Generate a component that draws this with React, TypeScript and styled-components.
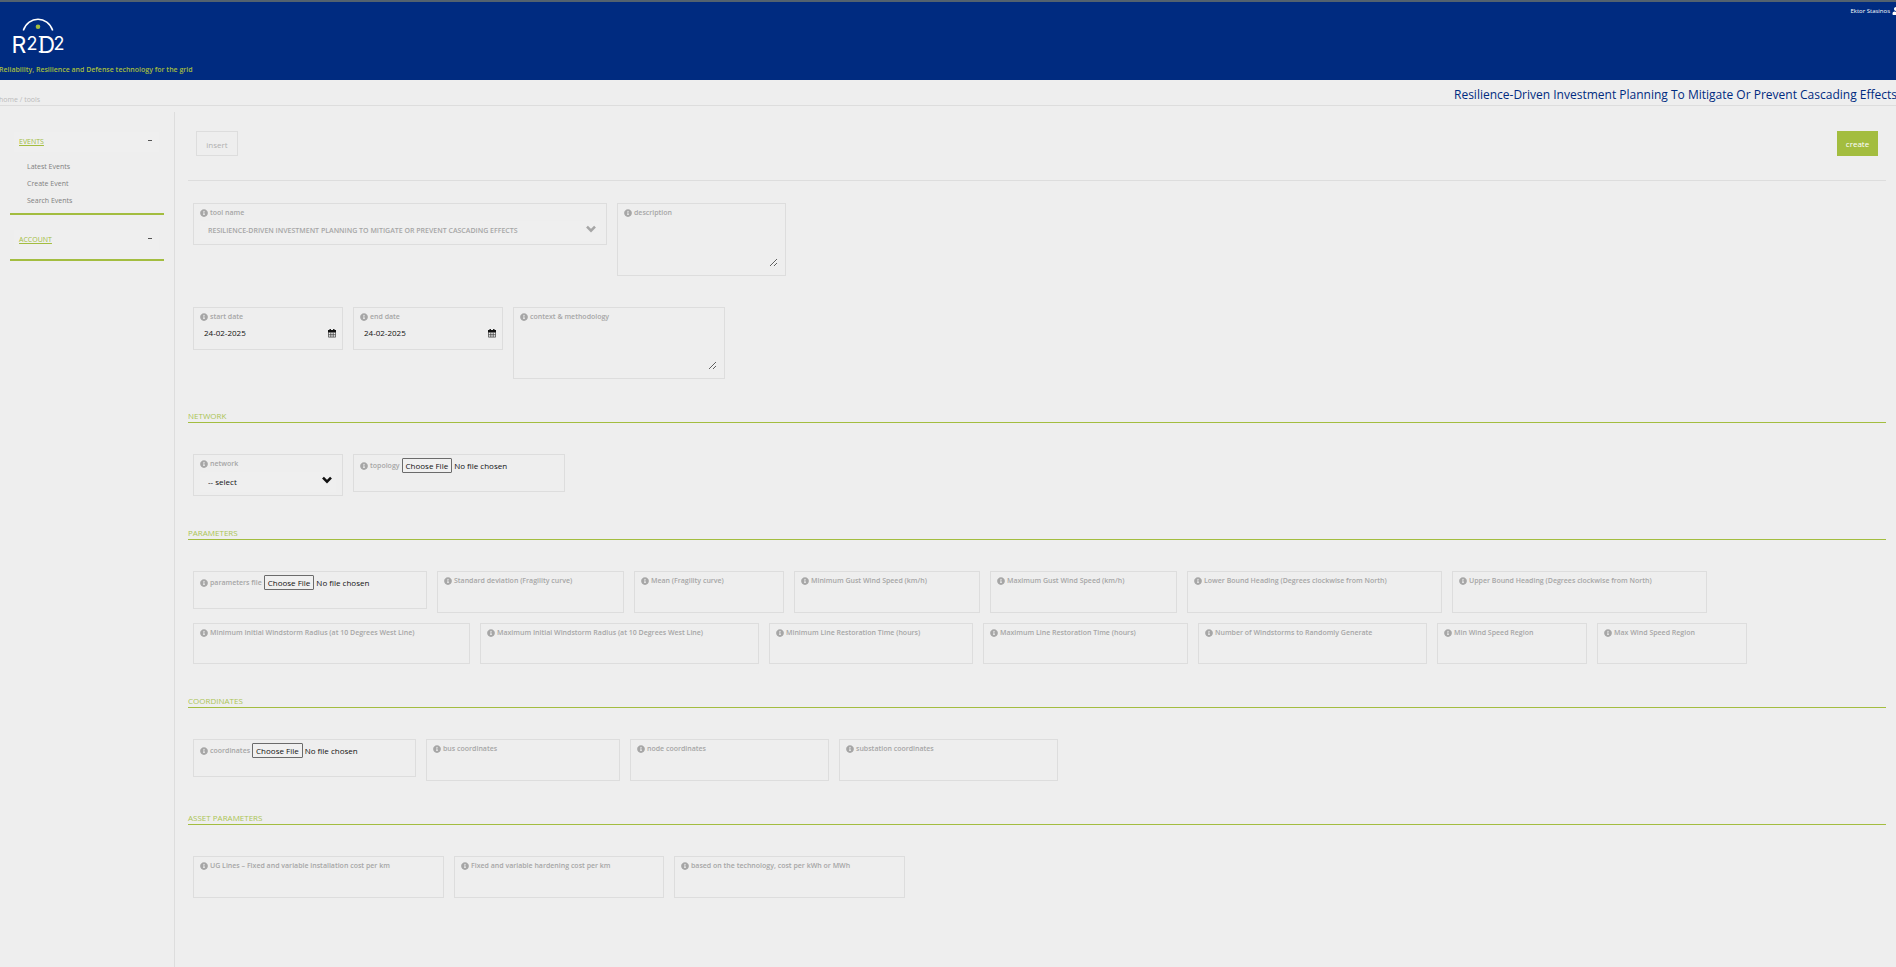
import React, { useId } from "react";
import styled, { createGlobalStyle } from "styled-components";
import { FaInfoCircle, FaUser } from "react-icons/fa";

const green = "#a3bd3f";
const blue = "#002b80";
const line = "#dddddd";
const muted = "#a6a6a6";

const GlobalStyle = createGlobalStyle`
  *, *::before, *::after { box-sizing: border-box; }
  html, body, #root { min-height: 100vh; }
  body {
    margin: 0;
    background: #eeeeee;
    color: ${muted};
    font-family: "Open Sans", sans-serif;
    font-size: 7px;
    line-height: 10px;
    overflow-x: hidden;
  }
  #root { display: flex; }
  input, select, textarea, button { font: inherit; color: inherit; }
`;

const Page = styled.div`
  display: flex;
  flex-direction: column;
  flex: 1;
  min-width: 0;
  overflow: hidden;
`;

const Header = styled.header`
  display: flex;
  justify-content: space-between;
  align-items: flex-start;
  height: 80px;
  background: ${blue};
  border-top: 2px solid #53626f;
`;

const Brand = styled.div`
  display: flex;
  flex-direction: column;
  gap: 8px;
  padding-top: 12px;
`;

const Logo = styled.svg`
  display: block;
  width: 56px;
  height: 42px;
  margin-left: 10px;
  overflow: visible;
`;

const Tagline = styled.p`
  margin: 0 0 0 -1px;
  color: ${green};
  font-weight: 600;
  line-height: 12px;
`;

const User = styled.a`
  display: flex;
  align-items: center;
  gap: 2px;
  margin: 4px -4px 0 0;
  color: #ffffff;
  font-size: 6px;
  text-decoration: none;
  white-space: nowrap;
  svg { width: 8px; height: 8px; }
`;

const TitleBar = styled.div`
  display: flex;
  justify-content: space-between;
  align-items: flex-end;
  height: 26px;
  border-bottom: 1px solid ${line};
`;

const Breadcrumb = styled.nav`
  margin-left: -1px;
  color: #bbbbbb;
  a { color: inherit; text-decoration: none; }
`;

const Title = styled.h1`
  margin: 0 -1px 0 0;
  padding-bottom: 2px;
  color: ${blue};
  font-size: 12px;
  font-weight: 400;
  line-height: 16px;
  white-space: nowrap;
`;

const Body = styled.div`
  display: flex;
  flex: 1;
  padding-top: 6px;
`;

const Sidebar = styled.aside`
  flex: 0 0 175px;
  padding: 20px 10px 0;
  border-right: 1px solid ${line};
`;

const MenuGroup = styled.section`
  padding-bottom: 9px;
  margin-bottom: 15px;
  border-bottom: 2px solid ${green};
`;

const MenuHead = styled.div`
  display: flex;
  justify-content: space-between;
  align-items: center;
  height: 20px;
  margin: 0 5px 0 4px;
  padding: 0 7px 0 5px;
  background: #efefef;
  a { color: ${green}; }
`;

const Collapse = styled.button`
  width: 4px;
  height: 10px;
  padding: 0;
  border: 0;
  background: linear-gradient(#555555, #555555) 0 3px / 4px 1px no-repeat;
`;

const MenuList = styled.ul`
  display: flex;
  flex-direction: column;
  gap: 7px;
  margin: 10px 0 -2px;
  padding: 0 0 0 17px;
  list-style: none;
  a { color: #808080; text-decoration: none; }
`;

const Main = styled.main`
  flex: 1;
  min-width: 0;
  padding: 19px 10px 60px 13px;
`;

const Actions = styled.div`
  display: flex;
  justify-content: space-between;
  height: 50px;
  padding: 0 8px;
  border-bottom: 1px solid ${line};
`;

const Action = styled.button<{ $primary?: boolean }>`
  height: 25px;
  width: ${(p) => (p.$primary ? 41 : 42)}px;
  padding: ${(p) => (p.$primary ? 0 : 2)}px 0 0;
  border: 1px solid ${(p) => (p.$primary ? green : line)};
  background: ${(p) => (p.$primary ? green : "transparent")};
  color: ${(p) => (p.$primary ? "#ffffff" : "#b0b0b0")};
  font-size: 8px;
`;

const Form = styled.form`
  display: flex;
  flex-direction: column;
  gap: 31px;
  padding-top: 22px;
`;

const Section = styled.section`
  display: flex;
  flex-direction: column;
  gap: 31px;
`;

const Heading = styled.h2`
  margin: 0;
  height: 13px;
  border-bottom: 1px solid ${green};
  color: #abc455;
  font-size: 8px;
  font-weight: 400;
  line-height: 11px;
`;

const Row = styled.div`
  display: flex;
  flex-wrap: wrap;
  align-items: flex-start;
  gap: 10px;
  padding: 0 5px;
`;

const Field = styled.div<{ $w: number; $h?: number }>`
  display: flex;
  flex-direction: column;
  flex: 0 0 ${(p) => p.$w}px;
  height: ${(p) => p.$h ?? 42}px;
  padding: 4px 6px 3px;
  border: 1px solid ${line};
`;

const Label = styled.label`
  display: flex;
  align-items: center;
  gap: 2px;
  font-weight: 600;
  white-space: nowrap;
  svg { width: 8px; height: 8px; flex: none; }
`;

const TextInput = styled.input`
  flex: 1;
  width: 100%;
  min-height: 0;
  padding: 0 4px;
  border: 0;
  background: transparent;
  font-size: 8px;
  outline: none;
`;

const TextArea = styled.textarea`
  flex: 1;
  margin: 0 1px 5px 0;
  padding: 2px;
  border: 0;
  background: transparent;
  outline: none;
  resize: both;
`;

const SelectWrap = styled.div<{ $dark?: boolean }>`
  display: grid;
  align-items: center;
  height: 20px;
  margin-top: 3px;
  color: ${(p) => (p.$dark ? "#111111" : "#a6a6a6")};
  font-size: ${(p) => (p.$dark ? 8 : 7)}px;
  font-weight: ${(p) => (p.$dark ? 400 : 600)};
  > * { grid-area: 1 / 1; }
  svg {
    justify-self: end;
    width: 10px;
    height: 8px;
    margin: 0 4px 4px 0;
    pointer-events: none;
  }
`;

const Select = styled.select`
  appearance: none;
  width: 100%;
  height: 20px;
  padding: 0 8px 1px;
  border: 0;
  background: #efefef;
  &:disabled { color: #a6a6a6; opacity: 1; }
`;

const DateWrap = styled.div`
  display: flex;
  align-items: center;
  height: 20px;
  margin-top: 1px;
  color: #111111;
  svg { width: 8px; height: 9px; flex: none; }
`;

const FileRow = styled.div`
  display: flex;
  align-items: center;
  gap: 2px;
  height: 13px;
`;

const FileInput = styled.input`
  flex: 1;
  min-width: 0;
  height: 15px;
  color: #111111;
  font-size: 8px;
  &::file-selector-button {
    height: 15px;
    margin: 0 2px 0 0;
    padding: 0 3px;
    border: 1px solid #6b6b6b;
    border-radius: 1px;
    background: #f0f0f0;
    color: #111111;
    font: inherit;
  }
`;

const Chevron = () => (
  <svg viewBox="0 0 10 8" aria-hidden="true">
    <path d="M1 1.6 5 5.6 9 1.6" fill="none" stroke="currentColor" strokeWidth="2.6" />
  </svg>
);

const Calendar = () => (
  <svg viewBox="0 0 8 9" aria-hidden="true">
    <path d="M0 1h8v2.4H0z M1.5 0h1.4v2H1.5z M5.1 0h1.4v2H5.1z" fill="#111" />
    <path d="M.4 3v5.1h7.2V3 M2.8 3.4V8 M5.2 3.4V8 M.4 5.7h7.2" fill="none" stroke="#333" strokeWidth=".7" />
  </svg>
);

type Base = { label: string; w: number; h?: number };

const Text = ({ label, w, h }: Base) => {
  const id = useId();
  return (
    <Field $w={w} $h={h}>
      <Label htmlFor={id}><FaInfoCircle />{label}</Label>
      <TextInput id={id} type="text" />
    </Field>
  );
};

const Area = ({ label, w, h }: Base) => {
  const id = useId();
  return (
    <Field $w={w} $h={h}>
      <Label htmlFor={id}><FaInfoCircle />{label}</Label>
      <TextArea id={id} />
    </Field>
  );
};

const DateField = ({ label, w, h }: Base) => {
  const id = useId();
  return (
    <Field $w={w} $h={h}>
      <Label htmlFor={id}><FaInfoCircle />{label}</Label>
      <DateWrap>
        <TextInput id={id} type="text" defaultValue="24-02-2025" />
        <Calendar />
      </DateWrap>
    </Field>
  );
};

const SelectField = ({ label, w, option, disabled }: Base & { option: string; disabled?: boolean }) => {
  const id = useId();
  return (
    <Field $w={w}>
      <Label htmlFor={id}><FaInfoCircle />{label}</Label>
      <SelectWrap $dark={!disabled}>
        <Select id={id} disabled={disabled}><option>{option}</option></Select>
        <Chevron />
      </SelectWrap>
    </Field>
  );
};

const FileField = ({ label, w }: Base) => {
  const id = useId();
  return (
    <Field $w={w} $h={38}>
      <FileRow>
        <Label htmlFor={id}><FaInfoCircle />{label}</Label>
        <FileInput id={id} type="file" />
      </FileRow>
    </Field>
  );
};

const windParameters: Base[] = [
  { label: "Standard deviation (Fragility curve)", w: 187 },
  { label: "Mean (Fragility curve)", w: 150 },
  { label: "Minimum Gust Wind Speed (km/h)", w: 186 },
  { label: "Maximum Gust Wind Speed (km/h)", w: 187 },
  { label: "Lower Bound Heading (Degrees clockwise from North)", w: 255 },
  { label: "Upper Bound Heading (Degrees clockwise from North)", w: 255 },
  { label: "Minimum Initial Windstorm Radius (at 10 Degrees West Line)", w: 277, h: 41 },
  { label: "Maximum Initial Windstorm Radius (at 10 Degrees West Line)", w: 279, h: 41 },
  { label: "Minimum Line Restoration Time (hours)", w: 204, h: 41 },
  { label: "Maximum Line Restoration Time (hours)", w: 205, h: 41 },
  { label: "Number of Windstorms to Randomly Generate", w: 229, h: 41 },
  { label: "Min Wind Speed Region", w: 150, h: 41 },
  { label: "Max Wind Speed Region", w: 150, h: 41 },
];

const coordinates: Base[] = [
  { label: "bus coordinates", w: 194 },
  { label: "node coordinates", w: 199 },
  { label: "substation coordinates", w: 219 },
];

const assets: Base[] = [
  { label: "UG Lines – Fixed and variable installation cost per km", w: 251 },
  { label: "Fixed and variable hardening cost per km", w: 210 },
  { label: "based on the technology, cost per kWh or MWh", w: 231 },
];

export default function App() {
  return (
    <>
      <GlobalStyle />
      <Page>
        <Header>
          <Brand>
            <Logo viewBox="10 14 56 42" role="img" aria-label="R2D2">
              <path d="M23.3 30.5C28 15.5 48 15.5 52.7 30.5" fill="none" stroke="#fff" strokeWidth="1.5" />
              <circle cx="38" cy="26.7" r="2.3" fill={green} />
              <path d="M38.8 36.6h4 M38.8 51.8h4" stroke="#fff" strokeWidth="1.4" />
              <g fill="#fff" fontFamily="Inter, sans-serif" fontWeight="400">
                <text x="11.4" y="52.6" fontSize="23">R</text>
                <text x="38.6" y="52.6" fontSize="23">D</text>
                <text x="26.4" y="49.6" fontSize="18">2</text>
                <text x="53.4" y="49.6" fontSize="18">2</text>
              </g>
            </Logo>
            <Tagline>Reliability, Resilience and Defense technology for the grid</Tagline>
          </Brand>
          <User href="#">Ektor Stasinos <FaUser /></User>
        </Header>
        <TitleBar>
          <Breadcrumb><a href="#">home</a> / <a href="#">tools</a></Breadcrumb>
          <Title>Resilience-Driven Investment Planning To Mitigate Or Prevent Cascading Effects</Title>
        </TitleBar>
        <Body>
          <Sidebar>
            <MenuGroup>
              <MenuHead><a href="#">EVENTS</a><Collapse aria-label="Collapse events" /></MenuHead>
              <MenuList>
                <li><a href="#">Latest Events</a></li>
                <li><a href="#">Create Event</a></li>
                <li><a href="#">Search Events</a></li>
              </MenuList>
            </MenuGroup>
            <MenuGroup>
              <MenuHead><a href="#">ACCOUNT</a><Collapse aria-label="Collapse account" /></MenuHead>
            </MenuGroup>
          </Sidebar>
          <Main>
            <Actions>
              <Action type="button">insert</Action>
              <Action type="button" $primary>create</Action>
            </Actions>
            <Form>
              <Row>
                <SelectField
                  label="tool name"
                  w={414}
                  disabled
                  option="RESILIENCE-DRIVEN INVESTMENT PLANNING TO MITIGATE OR PREVENT CASCADING EFFECTS"
                />
                <Area label="description" w={169} h={73} />
              </Row>
              <Row>
                <DateField label="start date" w={150} h={43} />
                <DateField label="end date" w={150} h={43} />
                <Area label="context & methodology" w={212} h={72} />
              </Row>
              <Section>
                <Heading>NETWORK</Heading>
                <Row>
                  <SelectField label="network" w={150} option="-- select" />
                  <FileField label="topology" w={212} />
                </Row>
              </Section>
              <Section>
                <Heading>PARAMETERS</Heading>
                <Row>
                  <FileField label="parameters file" w={234} />
                  {windParameters.map((f) => <Text key={f.label} {...f} />)}
                </Row>
              </Section>
              <Section>
                <Heading>COORDINATES</Heading>
                <Row>
                  <FileField label="coordinates" w={223} />
                  {coordinates.map((f) => <Text key={f.label} {...f} />)}
                </Row>
              </Section>
              <Section>
                <Heading>ASSET PARAMETERS</Heading>
                <Row>{assets.map((f) => <Text key={f.label} {...f} />)}</Row>
              </Section>
            </Form>
          </Main>
        </Body>
      </Page>
    </>
  );
}
